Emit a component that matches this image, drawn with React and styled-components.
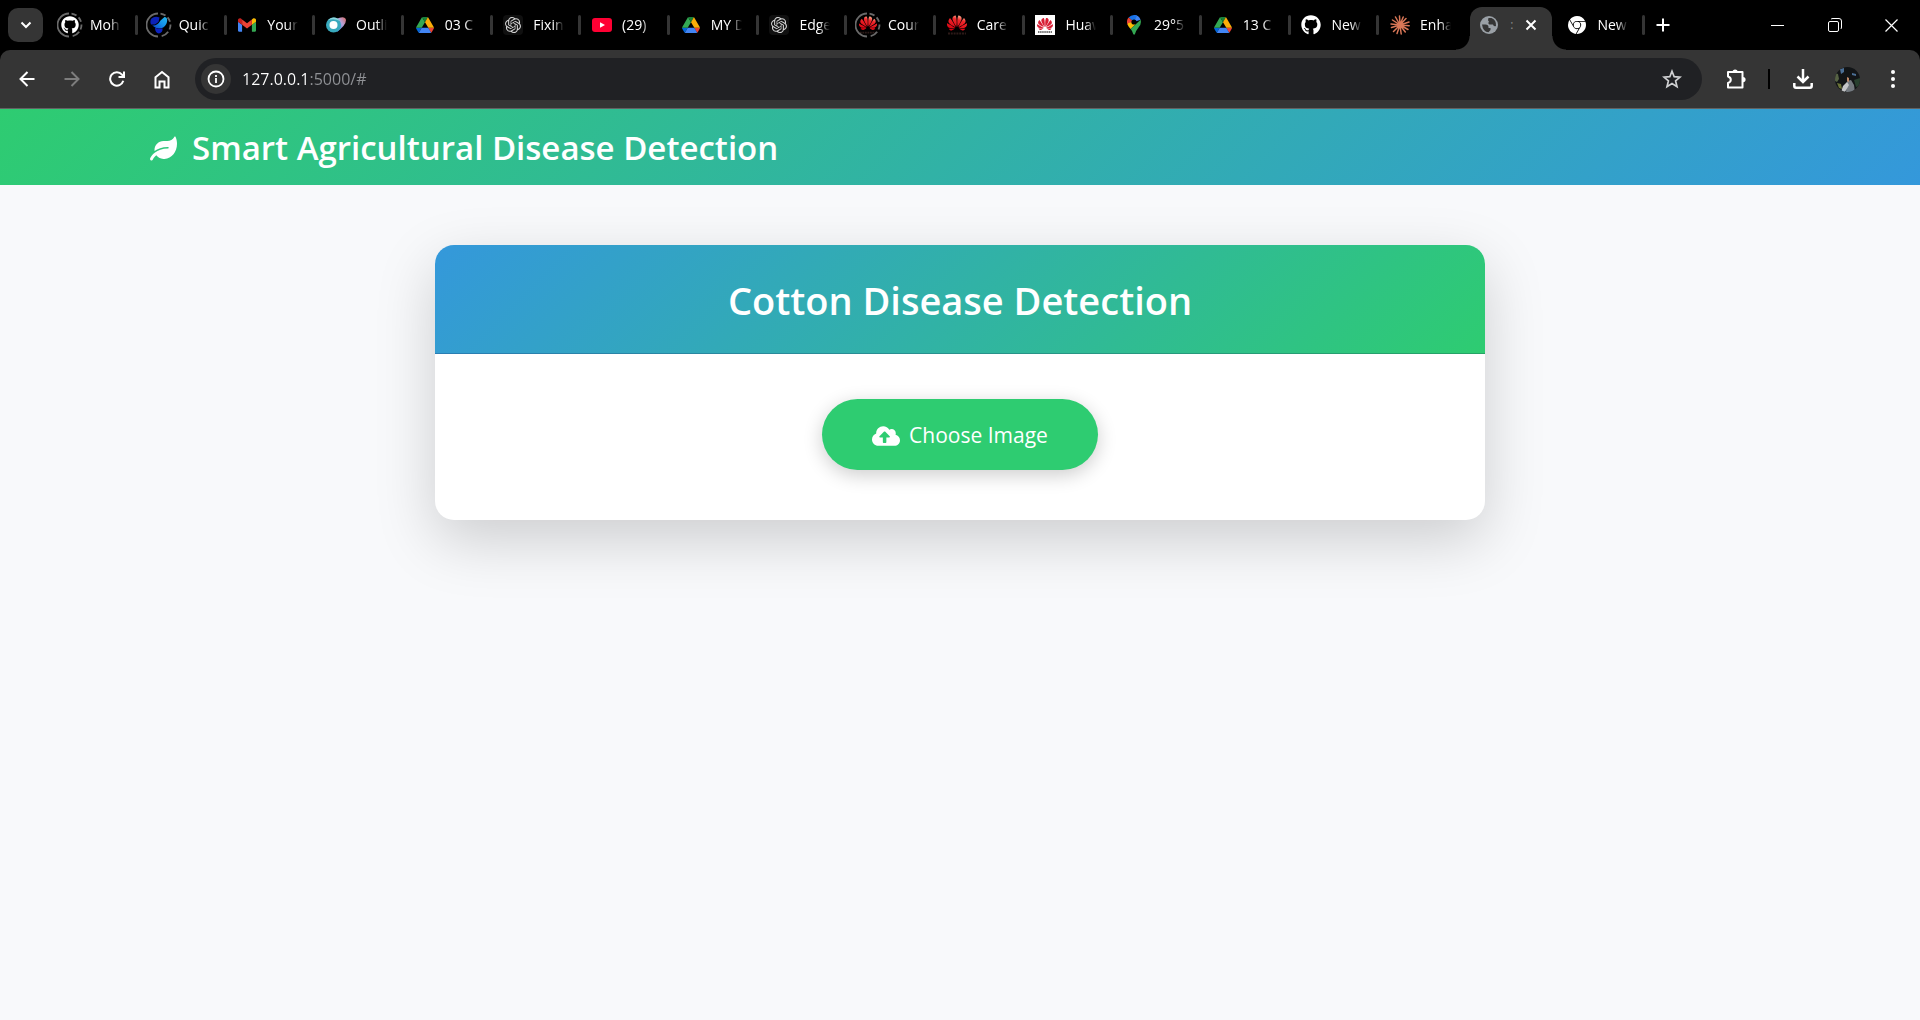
import React from "react";
import styled, { createGlobalStyle, css } from "styled-components";
import { FaLeaf, FaCloudUploadAlt, FaGithub } from "react-icons/fa";
import { SiOpenai, SiHuawei, SiGooglechrome } from "react-icons/si";

const GlobalStyle = createGlobalStyle`
  *, *::before, *::after { box-sizing: border-box; }
  body {
    margin: 0;
    background: #f8f9fb;
    font-family: "Open Sans", "Noto Sans", sans-serif;
  }
  button, input { font: inherit; }
`;

const Screen = styled.div`
  display: flex;
  flex-direction: column;
  min-height: 100vh;
`;

/* ---------- Browser tab strip ---------- */

const TabStrip = styled.header`
  display: flex;
  height: 50px;
  padding-left: 8px;
  background: #000;
`;

const resetButton = css`
  display: flex;
  align-items: center;
  justify-content: center;
  flex: none;
  padding: 0;
  border: 0;
  background: transparent;
  color: #fff;
`;

const TabSearch = styled.button`
  ${resetButton}
  width: 35px;
  height: 34px;
  margin: 8px 4px 8px 0;
  border-radius: 10px;
  background: #353535;
`;

const Tabs = styled.div`
  display: flex;
  flex: 1;
  min-width: 0;
`;

const TabButton = styled.button`
  ${resetButton}
  position: relative;
  flex: 1 1 0;
  min-width: 0;
  justify-content: flex-start;
  gap: 7px;
  padding: 0 0 0 10px;
  font-size: 14px;
  line-height: 20px;

  &::after {
    content: "";
    display: ${(p) => (p.$divider ? "block" : "none")};
    flex: none;
    width: 3px;
    height: 20px;
    margin-left: auto;
    margin-right: -1px;
    border-radius: 2px;
    background: #353535;
  }
`;

const ActiveShape = styled.span`
  position: absolute;
  inset: 7px 2px 0 4px;
  border-radius: 12px 12px 0 0;
  background: #353535;

  &::before,
  &::after {
    content: "";
    position: absolute;
    bottom: 0;
    width: 14px;
    height: 14px;
  }
  &::before {
    right: 100%;
    background: radial-gradient(circle at 0 0, transparent 13px, #353535 14px);
  }
  &::after {
    left: 100%;
    background: radial-gradient(circle at 100% 0, transparent 13px, #353535 14px);
  }
`;

const Favicon = styled.span`
  position: relative;
  display: flex;
  align-items: center;
  justify-content: center;
  flex: none;
  width: 26px;
  height: 26px;
`;

const TabTitle = styled.span`
  width: 38px;
  flex: none;
  overflow: hidden;
  text-align: left;
  white-space: nowrap;
  mask-image: linear-gradient(to right, #000 20px, transparent 31px);
`;

const ActiveTitle = styled.span`
  position: relative;
  width: 6px;
  color: #8a8a8a;
  font-size: 12px;
`;

const CloseMark = styled.span`
  position: relative;
  display: flex;
`;

const NewTab = styled.button`
  ${resetButton}
  width: 40px;
`;

const WindowControls = styled.div`
  display: flex;
  margin-left: 66px;
`;

const WindowButton = styled.button`
  ${resetButton}
  width: 57px;
`;

/* ---------- Browser toolbar ---------- */

const ToolbarBack = styled.div`
  background: #000;
`;

const Toolbar = styled.div`
  display: flex;
  align-items: center;
  height: 59px;
  padding: 0 5px 0 4px;
  border-bottom: 1px solid #626262;
  border-radius: 10px 10px 0 0;
  background: #353535;
`;

const ToolButton = styled.button`
  ${resetButton}
  width: 45px;
  height: 42px;
`;

const Omnibox = styled.div`
  display: flex;
  align-items: center;
  flex: 1;
  height: 42px;
  margin: 0 11px;
  padding: 0 18px 0 6px;
  border-radius: 21px;
  background: #202124;
`;

const SiteInfo = styled.button`
  ${resetButton}
  width: 30px;
  height: 30px;
  border-radius: 50%;
  background: #353535;
`;

const Address = styled.input`
  flex: 1;
  min-width: 0;
  height: 30px;
  padding: 0;
  margin-left: 11px;
  border: 0;
  outline: 0;
  font-size: 16px;
  line-height: 22px;
  color: transparent;
  background: linear-gradient(to right, #fff 68px, #909296 68px);
  background-clip: text;
`;

const Bookmark = styled.button`
  ${resetButton}
  width: 24px;
  height: 30px;
`;

const ToolDivider = styled.span`
  width: 2px;
  height: 20px;
  margin: 0 10px;
  background: #000;
`;

const Avatar = styled.svg`
  border-radius: 50%;
`;

/* ---------- Web page ---------- */

const Navbar = styled.nav`
  background: linear-gradient(135deg, #2ecc71, #3498db);
`;

const Container = styled.div`
  display: flex;
  width: 100%;
  max-width: 1650px;
  margin: 0 auto;
  padding: 0 15px;
`;

const Brand = styled.a`
  display: flex;
  align-items: center;
  gap: 15px;
  padding: 15px 0 13px;
  color: #fff;
  font-size: 33px;
  font-weight: 600;
  line-height: 48px;
  text-decoration: none;
`;

const Main = styled.main`
  display: flex;
  justify-content: center;
  padding: 60px 15px;
`;

const Card = styled.section`
  width: 100%;
  max-width: 1050px;
  overflow: hidden;
  border-radius: 19px;
  background: #fff;
  box-shadow: 0 20px 60px rgba(0, 0, 0, 0.175);
`;

const CardHeader = styled.div`
  padding: 31px 30px 29px;
  border-bottom: 1px solid rgba(0, 0, 0, 0.175);
  background: linear-gradient(135deg, #3498db, #2ecc71);
  text-align: center;
`;

const CardTitle = styled.h1`
  margin: 0;
  color: #fff;
  font-size: 38px;
  font-weight: 600;
  line-height: 48px;
`;

const CardBody = styled.div`
  display: flex;
  justify-content: center;
  padding: 45px 30px 50px;
`;

const UploadButton = styled.button`
  ${resetButton}
  gap: 9px;
  padding: 20px 50px 18px;
  border-radius: 36px;
  background: #2ecc71;
  box-shadow: 0 5px 19px rgba(0, 0, 0, 0.2);
  font-size: 21px;
  line-height: 33px;
`;

/* ---------- Drawings ---------- */

const RingSvg = styled.svg`
  position: absolute;
  inset: 0;
`;

const Ring = () => (
  <RingSvg width="26" height="26" viewBox="0 0 26 26" fill="none" stroke="#6a6a6a" strokeWidth="1.8">
    <path d="M12 1.5A11.5 11.5 0 0 0 12 24.5" />
    <path d="M14.5 1.6a11.5 11.5 0 0 1 5 2M21.6 5.4a11.5 11.5 0 0 1 2.4 4.4M24.5 12.5a11.5 11.5 0 0 1-1 5M22.2 19.8a11.5 11.5 0 0 1-6.5 4.4" />
  </RingSvg>
);

const Drive = () => (
  <svg width="18" height="16" viewBox="0 0 87.3 78">
    <path d="m6.6 66.85 3.85 6.65c.8 1.4 1.95 2.5 3.3 3.3l13.75-23.8h-27.5c0 1.55.4 3.1 1.2 4.5z" fill="#0066da" />
    <path d="m43.65 25-13.75-23.8c-1.35.8-2.5 1.9-3.3 3.3l-25.4 44a9.06 9.06 0 0 0 -1.2 4.5h27.5z" fill="#34a853" />
    <path d="m73.55 76.8c1.35-.8 2.5-1.9 3.3-3.3l1.6-2.75 7.65-13.25c.8-1.4 1.2-2.95 1.2-4.5h-27.5l5.85 11.5z" fill="#ea4335" />
    <path d="m43.65 25 13.75-23.8c-1.35-.8-2.9-1.2-4.5-1.2h-18.5c-1.6 0-3.15.45-4.5 1.2z" fill="#188038" />
    <path d="m59.8 53h-32.3l-13.75 23.8c1.35.8 2.9 1.2 4.5 1.2h50.8c1.6 0 3.15-.45 4.5-1.2z" fill="#4285f4" />
    <path d="m73.4 26.5-12.7-22c-.8-1.4-1.95-2.5-3.3-3.3l-13.75 23.8 16.15 28h27.45c0-1.55-.4-3.1-1.2-4.5z" fill="#fbad08" />
  </svg>
);

const Gmail = () => (
  <svg width="18" height="14" viewBox="52 42 88 66">
    <path fill="#4285f4" d="M58 108h14V74L52 59v43c0 3.3 2.7 6 6 6" />
    <path fill="#34a853" d="M120 108h14c3.3 0 6-2.7 6-6V59l-20 15" />
    <path fill="#fbbc04" d="M120 48v26l20-15v-8c0-7.4-8.5-11.6-14.4-7.2" />
    <path fill="#ea4335" d="M72 74V48l24 18 24-18v26L96 92" />
    <path fill="#c5221f" d="M52 51v8l20 15V48l-5.6-4.2C60.5 39.4 52 43.6 52 51" />
  </svg>
);

const QuickBolt = () => (
  <svg width="18" height="18" viewBox="0 0 18 18">
    <defs>
      <linearGradient id="quick" x1="1" y1="0" x2="0" y2="1">
        <stop offset="0" stopColor="#22b8f0" />
        <stop offset="0.5" stopColor="#1590e8" />
        <stop offset="1" stopColor="#0a3fd0" />
      </linearGradient>
    </defs>
    <path d="M1.500 2.500Q5-.5 9.500 1.500L8.500 6 5 8.500H1Q-.5 5 1.500 2.500z" fill="#0c22b8" />
    <path d="M10.500 4.500 14.500 1Q17 1 17.200 4q0 5-4 7.500-6 2.500-11-2 5.300.5 8.300-5z" fill="url(#quick)" />
    <path d="M5 11.800q4 1.600 7.500.5.5 4.200-3.500 5.200-4-.5-4-5.700z" fill="#0b22c0" />
  </svg>
);

const Outlier = () => (
  <svg width="20" height="16" viewBox="0 0 20 16">
    <defs>
      <linearGradient id="outl" x1="0" y1="1" x2="1" y2="0">
        <stop offset="0" stopColor="#3a77e8" />
        <stop offset="0.6" stopColor="#b7a2d8" />
        <stop offset="1" stopColor="#d9675f" />
      </linearGradient>
    </defs>
    <path d="M10 2Q19-2 20 3q0 5-9 12z" fill="url(#outl)" />
    <circle cx="7.500" cy="8" r="7.500" fill="#38a9bd" />
    <path d="M2 3.200A7.500 7.500 0 0 1 14 4Q8 1 2 3.200z" fill="#8ed6dc" />
    <circle cx="7.500" cy="8" r="4" fill="#fff" />
  </svg>
);

const YouTube = () => (
  <svg width="20" height="14" viewBox="0 0 20 14">
    <rect width="20" height="14" rx="3" fill="#ff0033" />
    <path d="M8 4.200v5.600L13 7z" fill="#fff" />
  </svg>
);

const Pin = () => (
  <svg width="14" height="20" viewBox="0 0 14 20">
    <path d="M7 0a7 7 0 0 1 6.600 4.700L7 7z" fill="#4285f4" />
    <path d="M7 0Q3.800 0 1.600 2.500L7 7l3-6.300Q8.600 0 7 0z" fill="#1a73e8" />
    <path d="M1.600 2.500A7 7 0 0 0 .6 9.800L7 7z" fill="#ea4335" />
    <path d="M.6 9.800Q1.400 11.600 3.600 14L9.500 8.500 7 7 1.200 8z" fill="#fbbc04" />
    <path d="M13.600 4.700Q14.800 9 11.500 12.500 9 15.500 8 19q-.9 1.600-1.800 0-.7-3-2.600-5z" fill="#34a853" />
    <circle cx="7" cy="7" r="2.600" fill="#000" />
  </svg>
);

const Burst = () => (
  <svg width="20" height="20" viewBox="0 0 20 20" stroke="#d97757" strokeWidth="1.500" strokeLinecap="round">
    <path d="M10 10 9.500 1M10 10l3.200-8M10 10l6-6.500M10 10l9-3M10 10l9.200.8M10 10l8 4.500M10 10l5.300 7M10 10l1.200 9M10 10l-3 8.500M10 10l-6.500 6.500M10 10l-8.500 2.500M10 10 1 9M10 10 2.500 5M10 10 5.500 2" />
  </svg>
);

const Globe = () => (
  <svg width="18" height="18" viewBox="0 0 18 18">
    <circle cx="9" cy="9" r="9" fill="#9aa0a6" />
    <path d="M2 8.500h3.500q3 0 3 2.500v1h2v2l-2 2.300Q3 16 2 8.500z" fill="#353535" />
    <path d="M8.500 2q-1 3 .5 3.500-1.500 2 .5 3h3.500q.5 2.500 3 1.500Q16.500 4 11.500 2z" fill="#353535" />
  </svg>
);

const Openai = () => (
  <svg width="20" height="20" viewBox="0 0 20 20">
    <rect width="20" height="20" rx="4" fill="#101010" />
    <SiOpenai x="2" y="2" size={16} color="#d4d4d4" />
  </svg>
);

const HuaweiFlower = ({ size }) => (
  <svg width={size} height={size} viewBox="0 0 20 20">
    <defs>
      <linearGradient id="petals" x1="0.7" y1="0" x2="0.3" y2="1">
        <stop offset="0" stopColor="#ffc09a" />
        <stop offset="0.3" stopColor="#f0282c" />
        <stop offset="1" stopColor="#d8000f" />
      </linearGradient>
    </defs>
    <SiHuawei x="0" y="-2" size={20} fill="url(#petals)" />
    <path d="M1 18.500h18" stroke="#2c1a18" strokeWidth="2" strokeDasharray="2 .8" />
  </svg>
);

const HuaweiSheet = () => (
  <svg width="20" height="20" viewBox="0 0 20 20">
    <rect width="20" height="20" fill="#fff" />
    <SiHuawei x="2" y="1" size={16} color="#d81e35" />
    <path d="M3 17h14" stroke="#4a4a4a" strokeWidth="1.600" strokeDasharray="1.500 .6" />
  </svg>
);

const line = { fill: "none", stroke: "currentColor", strokeWidth: 2 };

const tabs = [
  { title: "Moh", icon: <FaGithub size={18} />, ring: true },
  { title: "Quic", icon: <QuickBolt />, ring: true },
  { title: "Your", icon: <Gmail /> },
  { title: "Outli", icon: <Outlier /> },
  { title: "03 C", icon: <Drive /> },
  { title: "Fixin", icon: <Openai /> },
  { title: "(29)", icon: <YouTube /> },
  { title: "MY D", icon: <Drive /> },
  { title: "Edge", icon: <Openai /> },
  { title: "Cour", icon: <HuaweiFlower size={18} />, ring: true },
  { title: "Care", icon: <HuaweiFlower size={20} /> },
  { title: "Huaw", icon: <HuaweiSheet /> },
  { title: "29°5", icon: <Pin /> },
  { title: "13 C", icon: <Drive /> },
  { title: "New", icon: <FaGithub size={20} /> },
  { title: "Enha", icon: <Burst />, last: true },
  { title: ":", icon: <Globe />, active: true },
  { title: "New", icon: <SiGooglechrome size={18} /> },
];

function Tab({ tab }) {
  if (tab.active) {
    return (
      <TabButton role="tab" aria-selected="true">
        <ActiveShape />
        <Favicon>{tab.icon}</Favicon>
        <ActiveTitle>{tab.title}</ActiveTitle>
        <CloseMark>
          <svg width="18" height="18" viewBox="0 0 18 18" {...line}>
            <path d="M4.500 4.500l9 9M13.500 4.500l-9 9" />
          </svg>
        </CloseMark>
      </TabButton>
    );
  }
  return (
    <TabButton role="tab" aria-selected="false" $divider={!tab.last}>
      <Favicon>
        {tab.ring && <Ring />}
        {tab.icon}
      </Favicon>
      <TabTitle>{tab.title}</TabTitle>
    </TabButton>
  );
}

export default function App() {
  return (
    <Screen>
      <GlobalStyle />
      <TabStrip>
        <TabSearch aria-label="Search tabs">
          <svg width="12" height="8" viewBox="0 0 12 8" {...line}>
            <path d="M1.500 1.500 6 6l4.500-4.500" />
          </svg>
        </TabSearch>
        <Tabs role="tablist">
          {tabs.map((tab, i) => (
            <Tab key={i} tab={tab} />
          ))}
        </Tabs>
        <NewTab aria-label="New tab">
          <svg width="14" height="14" viewBox="0 0 14 14" {...line}>
            <path d="M7 .5v13M.5 7h13" />
          </svg>
        </NewTab>
        <WindowControls>
          <WindowButton aria-label="Minimize">
            <svg width="13" height="13" viewBox="0 0 13 13" {...line} strokeWidth="1">
              <path d="M0 6.500h13" />
            </svg>
          </WindowButton>
          <WindowButton aria-label="Restore">
            <svg width="14" height="14" viewBox="0 0 14 14" {...line} strokeWidth="1">
              <rect x=".5" y="3.500" width="10" height="10" rx="1.500" />
              <path d="M3 1.200Q3.500.5 5 .5h6q2.500 0 2.500 2.500v6q0 1.500-.7 2" />
            </svg>
          </WindowButton>
          <WindowButton aria-label="Close window">
            <svg width="13" height="13" viewBox="0 0 13 13" {...line} strokeWidth="1.200">
              <path d="M.5.5l12 12M12.500.5l-12 12" />
            </svg>
          </WindowButton>
        </WindowControls>
      </TabStrip>

      <ToolbarBack>
        <Toolbar>
          <ToolButton aria-label="Back">
            <svg width="16" height="16" viewBox="0 0 16 16" {...line}>
              <path d="M15.500 8H2M8.500 1 1.500 8l7 7" />
            </svg>
          </ToolButton>
          <ToolButton aria-label="Forward" disabled>
            <svg width="16" height="16" viewBox="0 0 16 16" {...line} stroke="#7d7d7d">
              <path d="M.5 8H14M7.500 1l7 7-7 7" />
            </svg>
          </ToolButton>
          <ToolButton aria-label="Reload">
            <svg width="16" height="16" viewBox="0 0 16 16" {...line}>
              <path d="M14.300 9.800A6.700 6.700 0 1 1 13 3.600L15 6" />
              <path d="M15 .5V6H9.500" />
            </svg>
          </ToolButton>
          <ToolButton aria-label="Home">
            <svg width="16" height="19" viewBox="0 0 16 19" {...line}>
              <path d="M1.500 7.200 8 2l6.500 5.200V17.500h-4v-6h-5v6h-4z" />
            </svg>
          </ToolButton>
          <Omnibox>
            <SiteInfo aria-label="View site information">
              <svg width="18" height="18" viewBox="0 0 18 18" {...line} strokeWidth="1.800">
                <circle cx="9" cy="9" r="7.500" />
                <path d="M9 8v5M9 5v2" />
              </svg>
            </SiteInfo>
            <Address aria-label="Address" defaultValue="127.0.0.1:5000/#" />
            <Bookmark aria-label="Bookmark this tab">
              <svg width="20" height="20" viewBox="0 0 20 20" {...line} stroke="#d0d1d3" strokeWidth="1.700">
                <path d="M10 2.200l2.200 5.500 5.900.4-4.500 3.800 1.400 5.800-5-3.200-5 3.200 1.400-5.800-4.500-3.800 5.900-.4z" />
              </svg>
            </Bookmark>
          </Omnibox>
          <ToolButton aria-label="Extensions">
            <svg width="22" height="22" viewBox="0 0 22 22" {...line} strokeLinejoin="round">
              <path d="M3 4h14.500v15.500H3V15q2.800-.8 2.800-3.200T3 8.500z" />
              <path d="M7.500 4a2.600 2.600 0 0 1 5.200 0zM18 9a2.600 2.600 0 0 1 0 5.200z" fill="#fff" stroke="none" />
            </svg>
          </ToolButton>
          <ToolDivider />
          <ToolButton aria-label="Downloads">
            <svg width="20" height="20" viewBox="0 0 20 20" fill="none" stroke="currentColor" strokeWidth="2.500">
              <path d="M10 0v12.500M4.500 7.500 10 13 15.500 7.500M1.300 14v3q0 1.700 1.700 1.700h14q1.700 0 1.700-1.700v-3" />
            </svg>
          </ToolButton>
          <ToolButton aria-label="Profile">
            <Avatar width="25" height="25" viewBox="0 0 25 25">
              <rect width="25" height="25" fill="#121517" />
              <path d="M0 6l3 1 1 5-2 3-2-1z" fill="#566244" />
              <path d="M2 16l4 1 1 5-3-1z" fill="#6b7338" />
              <path d="M5 2l4-1 0 4-3 2zM17 6l4 1 0 2-4-1z" fill="#4b6f96" />
              <path d="M19 13l6-2v8l-4 1z" fill="#28402f" />
              <path d="M12 14l4-1 3 5 1 7H11z" fill="#747a80" />
              <path d="M12 15l2 3-4 7H6l2-6z" fill="#c4c6c8" />
              <path d="M12 10l2 1v4l-2-1z" fill="#c08a6a" />
            </Avatar>
          </ToolButton>
          <ToolButton aria-label="Menu">
            <svg width="4" height="18" viewBox="0 0 4 18" fill="currentColor">
              <circle cx="2" cy="2" r="2" />
              <circle cx="2" cy="9" r="2" />
              <circle cx="2" cy="16" r="2" />
            </svg>
          </ToolButton>
        </Toolbar>
      </ToolbarBack>

      <Navbar>
        <Container>
          <Brand href="#">
            <FaLeaf size={27} />
            Smart Agricultural Disease Detection
          </Brand>
        </Container>
      </Navbar>

      <Main>
        <Card>
          <CardHeader>
            <CardTitle>Cotton Disease Detection</CardTitle>
          </CardHeader>
          <CardBody>
            <UploadButton type="button">
              <FaCloudUploadAlt size={28} />
              Choose Image
            </UploadButton>
          </CardBody>
        </Card>
      </Main>
    </Screen>
  );
}
